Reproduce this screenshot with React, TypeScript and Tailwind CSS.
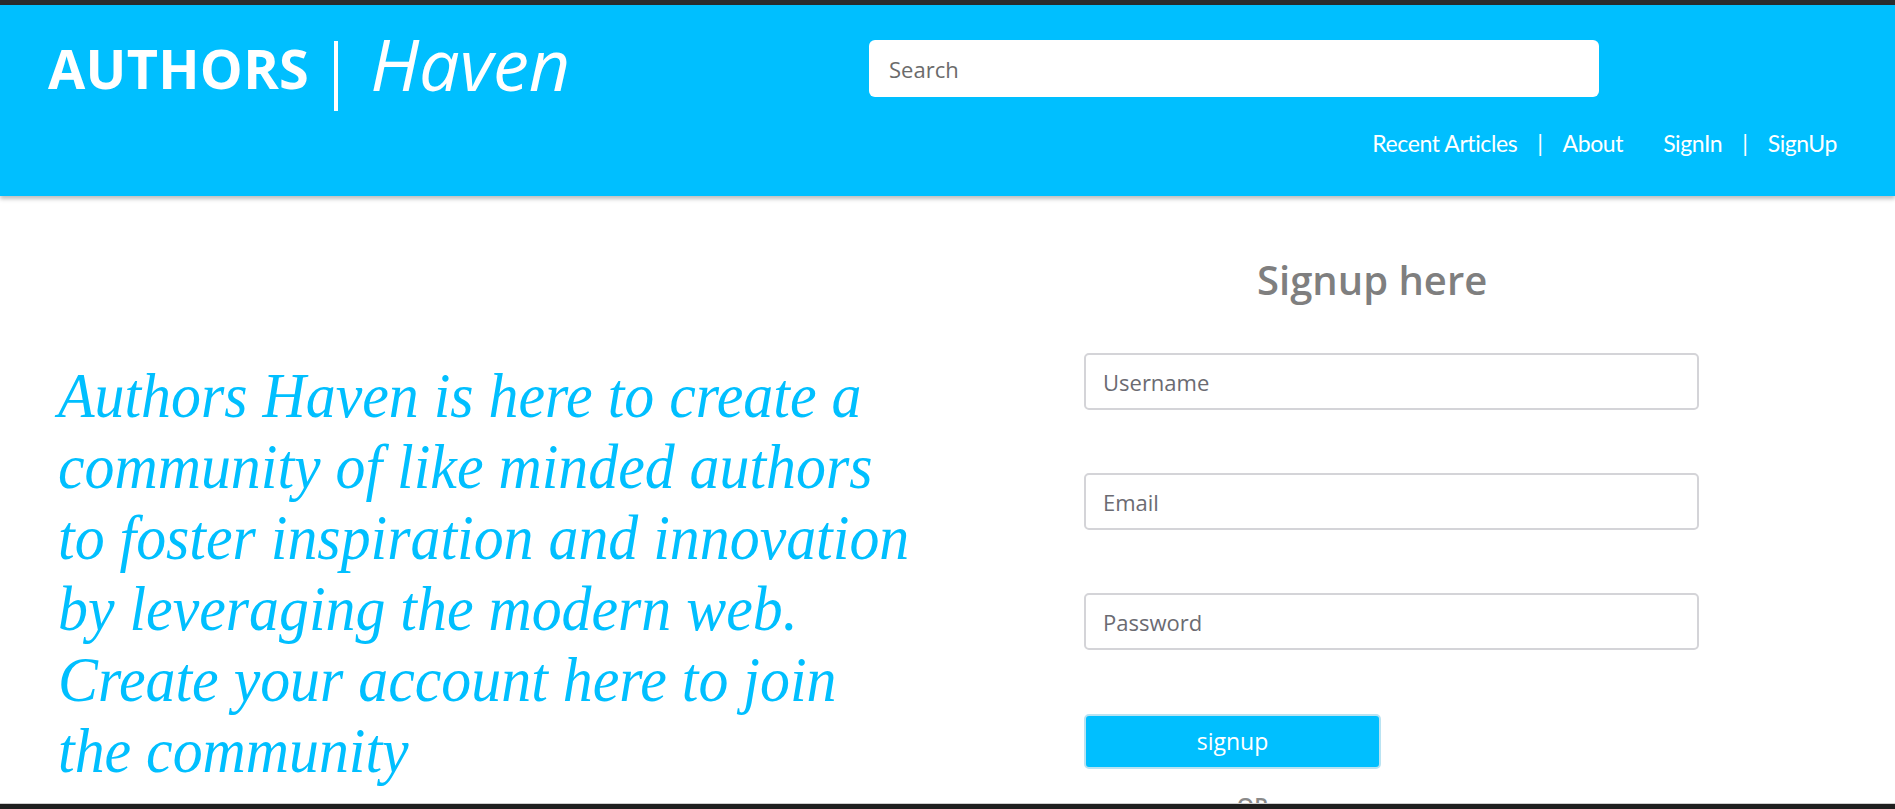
const NavLink = ({ label }: { label: string }) => (
  <a href="#" className="text-white hover:underline">
    {label}
  </a>
);

const Header = () => {
  return (
    <header className="bg-[#00bfff] h-[191px] shrink-0 flex items-start shadow-[0_3px_4px_rgba(0,0,0,0.25)] relative z-10">
      <div className="flex items-end pl-[48px] pt-[26px] text-white" style={{ fontFamily: '"Open Sans", sans-serif' }}>
        <span className="text-[54px] font-bold leading-[54px] tracking-[0.3px]">AUTHORS</span>
        <span className="w-[4px] h-[70px] bg-white ml-[25px] mr-[32px] mb-[-16px]" />
        <span className="text-[72px] italic font-medium leading-[64px]">Haven</span>
      </div>

      <div className="ml-auto flex flex-col items-end pt-[35px] pr-[58px]">
        <input
          type="text"
          placeholder="Search"
          className="w-[730px] h-[57px] mr-[238px] rounded-[6px] bg-white px-[20px] text-[22px] text-gray-700 placeholder:text-[#6b6b6b] outline-none"
          style={{ fontFamily: '"Open Sans", sans-serif' }}
        />
        <nav className="flex items-center mt-[29px] text-[23px] text-white tracking-[-0.4px]" style={{ fontFamily: 'Lato, sans-serif' }}>
          <NavLink label="Recent Articles" />
          <span className="mx-[20px]">|</span>
          <NavLink label="About" />
          <span className="w-[40px]" />
          <NavLink label="SignIn" />
          <span className="mx-[20px]">|</span>
          <NavLink label="SignUp" />
        </nav>
      </div>
    </header>
  );
};

const Field = ({ placeholder, type = 'text' }: { placeholder: string; type?: string }) => (
  <input
    type={type}
    placeholder={placeholder}
    className="shrink-0 w-[615px] h-[57px] rounded-[5px] border-2 border-[#d4d4d8] bg-white px-[17px] text-[22px] text-gray-700 placeholder:text-[#6b6b72] outline-none"
  />
);

const SignupForm = () => {
  return (
    <div className="flex flex-col pt-[61px]" style={{ fontFamily: '"Open Sans", sans-serif' }}>
      <h2 className="shrink-0 ml-[173px] text-[40px] font-semibold leading-[46px] text-[#7f7f7f]">
        Signup here
      </h2>
      <div className="shrink-0 flex flex-col gap-[63px] mt-[50px]">
        <Field placeholder="Username" />
        <Field placeholder="Email" type="email" />
        <Field placeholder="Password" type="password" />
      </div>
      <button className="shrink-0 mt-[64px] w-[297px] h-[55px] rounded-[5px] border-2 border-[#b9e3f2] bg-[#00bfff] text-white text-[23px]">
        signup
      </button>
      <p className="shrink-0 mt-[20px] w-[297px] text-center text-[22px] font-semibold text-[#8a8a8a] pl-[40px]">OR</p>
    </div>
  );
};

export default function App() {
  return (
    <div className="w-[1895px] h-[809px] overflow-hidden bg-white flex flex-col">
      <div className="h-[5px] shrink-0 bg-[#2a2c2e]" />
      <Header />
      <main className="flex-1 flex overflow-hidden">
        <div className="w-[1084px] shrink-0 pl-[58px] pt-[165px]">
          <p
            className="text-[#00bfff] italic text-[63px] leading-[71px] whitespace-nowrap scale-x-[0.95] origin-left"
            style={{ fontFamily: '"Liberation Serif", serif' }}
          >
            Authors Haven is here to create a<br />
            community of like minded authors<br />
            to foster inspiration and innovation<br />
            by leveraging the modern web.<br />
            Create your account here to join<br />
            the community
          </p>
        </div>
        <SignupForm />
      </main>
      <div className="h-[6px] shrink-0 bg-[#1f1f1f] border-t border-[#cfcfcf]" />
    </div>
  );
}
